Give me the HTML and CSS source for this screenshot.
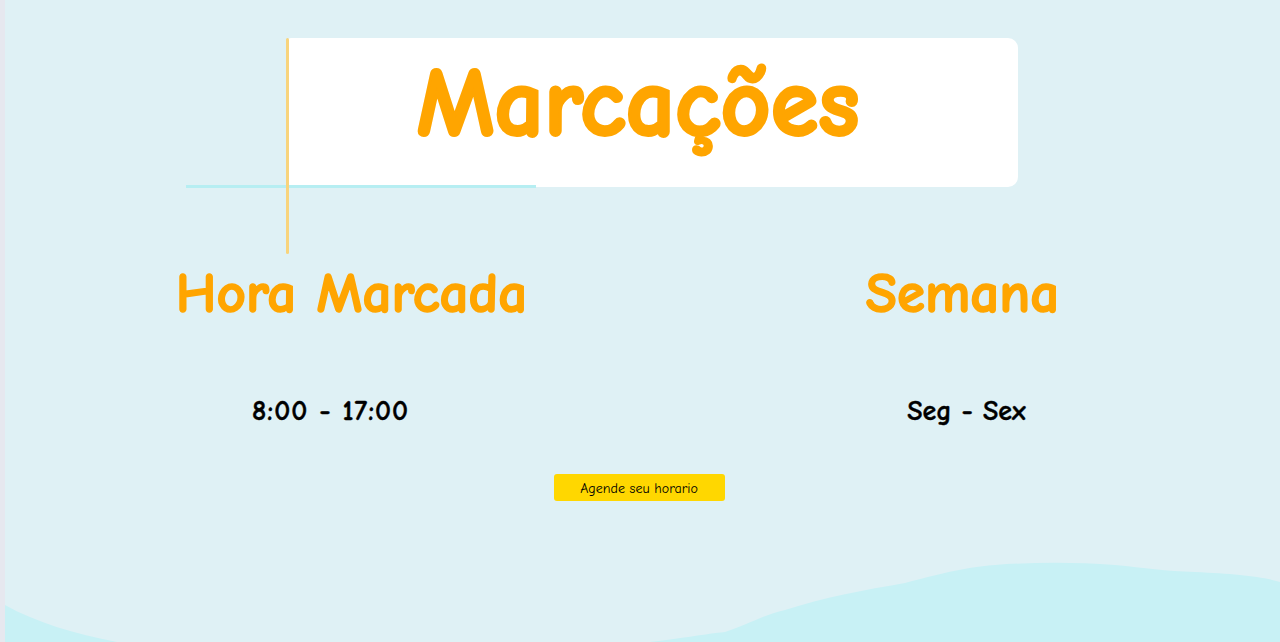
FILE: index.html
```html
<!DOCTYPE html>
<html lang="pt">
<head>
<meta charset="utf-8">
<title>Marcações</title>
<link rel="stylesheet" href="styles.css">
</head>
<body>
<div class="page">
  <svg class="waves" width="1275" height="90" viewBox="0 0 1275 90" preserveAspectRatio="none" aria-hidden="true">
    <path d="M0 53 C30 70 70 82 112 90 L0 90 Z" fill="#c8f1f5"/>
    <path d="M645 90 C680 86 700 82 720 80 C745 72 760 62 780 58 C820 45 860 38 900 31 C935 22 955 16 990 13 C1030 10 1070 10 1110 13 C1140 16 1160 19 1190 20 C1230 22 1255 24 1275 30 L1275 90 Z" fill="#c8f1f5"/>
  </svg>
  <span class="line-v"></span>
  <span class="line-h"></span>
  <header class="hero">
    <h1 class="title">Marcações</h1>
  </header>
  <section class="info">
    <div class="col">
      <h2 class="heading">Hora Marcada</h2>
      <p class="value value-left">8:00 - 17:00</p>
    </div>
    <div class="col">
      <h2 class="heading">Semana</h2>
      <p class="value value-right">Seg - Sex</p>
    </div>
  </section>
  <div class="actions">
    <button class="btn" type="button">Agende seu horario</button>
  </div>
</div>
</body>
</html>
```

FILE: styles.css
```css
* { box-sizing: border-box; }
html, body { margin: 0; padding: 0; }
body {
  background: #dff1f5;
  font-family: "Comic Sans MS", "Comic Neue", "DejaVu Sans", sans-serif;
  overflow: hidden;
}
.page {
  position: relative;
  height: 642px;
  border-left: 5px solid #e6e8ef;
  padding-top: 38px;
}
.waves {
  position: absolute;
  left: 0;
  bottom: 0;
}
.line-v {
  position: absolute;
  left: 281px;
  top: 38px;
  width: 3px;
  height: 216px;
  background: #f8d47c;
  border-radius: 2px;
  z-index: 2;
}
.line-h {
  position: absolute;
  left: 181px;
  top: 185px;
  width: 350px;
  height: 3px;
  background: #b6eef2;
  z-index: 1;
}
.hero {
  margin-left: 283px;
  width: 730px;
  height: 149px;
  background: #ffffff;
  border-radius: 3px 10px 10px 3px;
  padding-top: 19px;
  text-align: center;
}
.title {
  margin: 0;
  font-size: 97px;
  font-weight: bold;
  color: #ffa500;
  line-height: 93px;
  padding-right: 30px;
  -webkit-text-stroke: 3px #ffa500;
}
.info {
  display: grid;
  grid-template-columns: 611px 611px;
  margin: 81px 0 0 41px;
}
.col { text-align: center; }
.heading {
  margin: 0;
  font-size: 57px;
  font-weight: bold;
  color: #ffa500;
  line-height: 51px;
  -webkit-text-stroke: 1.5px #ffa500;
}
.value {
  margin: 79px 0 0;
  font-size: 28px;
  font-weight: bold;
  color: #000;
  line-height: 27px;
  -webkit-text-stroke: 0.4px #000;
}
.value-left { padding-right: 42px; letter-spacing: 1px; }
.value-right { padding-left: 8px; }
.actions {
  margin-top: 49px;
  display: flex;
  justify-content: center;
  padding-right: 7px;
}
.btn {
  width: 171px;
  height: 27px;
  border: none;
  border-radius: 3px;
  background: #ffd700;
  color: #000;
  font-family: inherit;
  font-size: 14px;
  padding: 2px 0 0;
  cursor: pointer;
}
```
